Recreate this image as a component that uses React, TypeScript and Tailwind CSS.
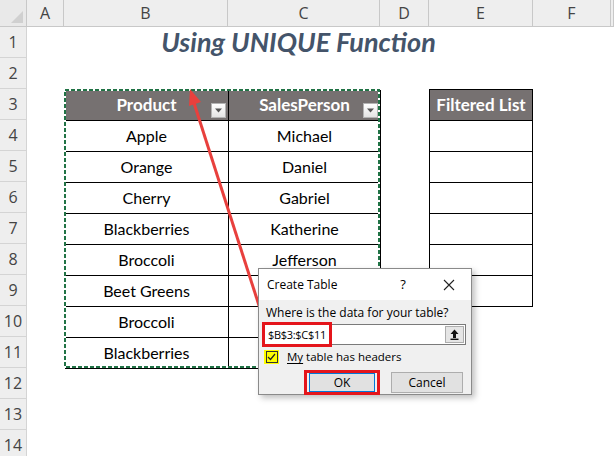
import React from 'react';

const columns = ['A', 'B', 'C', 'D', 'E', 'F', ''];

const rows: [string, string][] = [
  ['Apple', 'Michael'],
  ['Orange', 'Daniel'],
  ['Cherry', 'Gabriel'],
  ['Blackberries', 'Katherine'],
  ['Broccoli', 'Jefferson'],
  ['Beet Greens', ''],
  ['Broccoli', ''],
  ['Blackberries', ''],
];

const cellFont = { fontFamily: 'Lato, "Open Sans", sans-serif' };
const uiFont = { fontFamily: '"Open Sans", "Noto Sans", sans-serif' };

function FilterButton() {
  return (
    <div className="absolute right-[2px] bottom-[2px] w-[15px] h-[15px] border border-[#b4b4b4] bg-gradient-to-b from-white to-[#e4e4e4] flex items-center justify-center">
      <svg width="7" height="5" viewBox="0 0 7 5">
        <path d="M0 0.5 L7 0.5 L3.5 4.5 Z" fill="#555" />
      </svg>
    </div>
  );
}

function CreateTableDialog() {
  return (
    <div
      className="absolute left-[258px] top-[268px] w-[214px] h-[127px] border border-[#8a8a8a] bg-[#f0f0f0] shadow-[3px_3px_6px_rgba(0,0,0,0.25)] flex flex-col text-[12px] text-black"
      style={uiFont}
    >
      <div className="h-[31px] bg-white flex items-center pl-[8px] shrink-0">
        <span className="flex-1">Create Table</span>
        <span className="w-[20px] text-center text-[13px] mr-[30px]">?</span>
        <svg width="12" height="12" viewBox="0 0 12 12" className="mr-[16px]">
          <path d="M1 1 L11 11 M11 1 L1 11" stroke="#222" strokeWidth="1.1" />
        </svg>
      </div>
      <div className="flex flex-col px-[5px] pt-[4px]">
        <div className="pl-[2px] leading-[17px]">Where is the data for your table?</div>
        <div className="relative mt-[3px] h-[21px] bg-white border border-[#7a7a7a] flex items-center">
          <span className="flex-1 pl-[3px] text-[11px] tracking-[-0.3px] leading-none">$B$3:$C$11</span>
          <div className="w-[19px] h-[17px] mr-[1px] bg-[#e5e5e5] border border-[#adadad] flex items-center justify-center">
            <svg width="9" height="11" viewBox="0 0 9 11">
              <path d="M4.5 0.5 L8.5 5 L6 5 L6 9 L3 9 L3 5 L0.5 5 Z" fill="#111" />
              <rect x="0.5" y="9.6" width="8" height="1.4" fill="#111" />
            </svg>
          </div>
          <div className="absolute left-[-3px] top-[-3px] w-[70px] h-[25px] border-[3px] border-[#e4151b]" />
        </div>
        <div className="flex items-center mt-[5px] h-[14px]">
          <div className="w-[15px] h-[14px] bg-[#ffff00] flex items-center justify-center">
            <div className="w-[12px] h-[12px] border border-[#333] flex items-center justify-center">
              <svg width="9" height="8" viewBox="0 0 9 8">
                <path d="M1 4 L3.5 6.5 L8 1" stroke="#222" strokeWidth="1.2" fill="none" />
              </svg>
            </div>
          </div>
          <span className="ml-[8px] text-[11.5px]">
            <span className="underline underline-offset-2">My</span> table has headers
          </span>
        </div>
        <div className="flex justify-end gap-[11px] mt-[6px] pr-[3px]">
          <div className="w-[76px] h-[25px] border-[3px] border-[#e4151b] flex items-center justify-center">
            <div className="w-[66px] h-[19px] bg-[#e1e1e1] border border-[#0078d7] flex items-center justify-center">
              OK
            </div>
          </div>
          <div className="w-[72px] h-[21px] mt-[2px] bg-[#e1e1e1] border border-[#adadad] flex items-center justify-center">
            Cancel
          </div>
        </div>
      </div>
    </div>
  );
}

export default function App() {
  return (
    <div className="relative w-[614px] h-[456px] overflow-hidden bg-white">
      <div className="grid grid-cols-[27px_37px_164px_152px_49px_104px_78px_1fr] grid-rows-[27px_repeat(14,31px)]">
        {/* corner */}
        <div className="bg-[#e9e9e9] border-r border-b border-[#c8c8c8] flex items-end justify-end p-[3px]">
          <svg width="12" height="12" viewBox="0 0 12 12">
            <path d="M12 0 L12 12 L0 12 Z" fill="#d0d0d0" />
          </svg>
        </div>
        {columns.map((c, i) => (
          <div
            key={i}
            className="bg-[#eeeeee] border-r border-b border-[#c8c8c8] flex items-center justify-center text-[16px] text-[#444]"
            style={uiFont}
          >
            {c}
          </div>
        ))}

        {Array.from({ length: 14 }).map((_, i) => (
          <div
            key={i}
            className="col-start-1 bg-[#eeeeee] border-r border-b border-[#d4d4d4] flex items-center justify-center text-[16px] text-[#444]"
            style={{ ...uiFont, gridRowStart: i + 2 }}
          >
            {i + 1}
          </div>
        ))}

        {/* title B1:E1 */}
        <div
          className="col-start-3 col-span-4 row-start-2 flex items-center justify-center text-[27px] font-bold italic text-[#44546a]"
          style={cellFont}
        >
          Using UNIQUE Function
        </div>

        {/* data table B3:C11 */}
        <div
          className="col-start-3 col-span-2 row-start-4 row-span-9 grid grid-cols-[164px_152px] grid-rows-[repeat(9,31px)] border-t border-l border-black text-[16px] text-black"
          style={cellFont}
        >
          <div className="relative bg-[#767171] border-r border-b border-black flex items-center justify-center font-bold text-white text-[17px]">
            Product
            <FilterButton />
          </div>
          <div className="relative bg-[#767171] border-r border-b border-black flex items-center justify-center font-bold text-white text-[17px]">
            SalesPerson
            <FilterButton />
          </div>
          {rows.map(([p, s], i) => (
            <React.Fragment key={i}>
              <div className="border-r border-b border-black flex items-center justify-center">{p}</div>
              <div className="border-r border-b border-black flex items-center justify-center">{s}</div>
            </React.Fragment>
          ))}
        </div>

        {/* filtered list E3:E9 */}
        <div
          className="col-start-6 row-start-4 row-span-7 grid grid-rows-[repeat(7,31px)] border-t border-l border-black"
          style={cellFont}
        >
          <div className="bg-[#767171] border-r border-b border-black flex items-center justify-center font-bold text-white text-[17px]">
            Filtered List
          </div>
          {Array.from({ length: 6 }).map((_, i) => (
            <div key={i} className="border-r border-b border-black" />
          ))}
        </div>
      </div>

      {/* copy marquee and arrow */}
      <svg className="absolute left-0 top-0 pointer-events-none" width="614" height="456">
        <rect x="65" y="90" width="314" height="277" fill="none" stroke="#ffffff" strokeWidth="2" />
        <rect x="65" y="90" width="314" height="277" fill="none" stroke="#217346" strokeWidth="2" strokeDasharray="4 2" />
        <line x1="263" y1="318" x2="194" y2="103" stroke="#e8403d" strokeWidth="3" />
        <polygon points="190,89 201,102 189,106" fill="#e8403d" />
      </svg>

      <CreateTableDialog />
    </div>
  );
}
